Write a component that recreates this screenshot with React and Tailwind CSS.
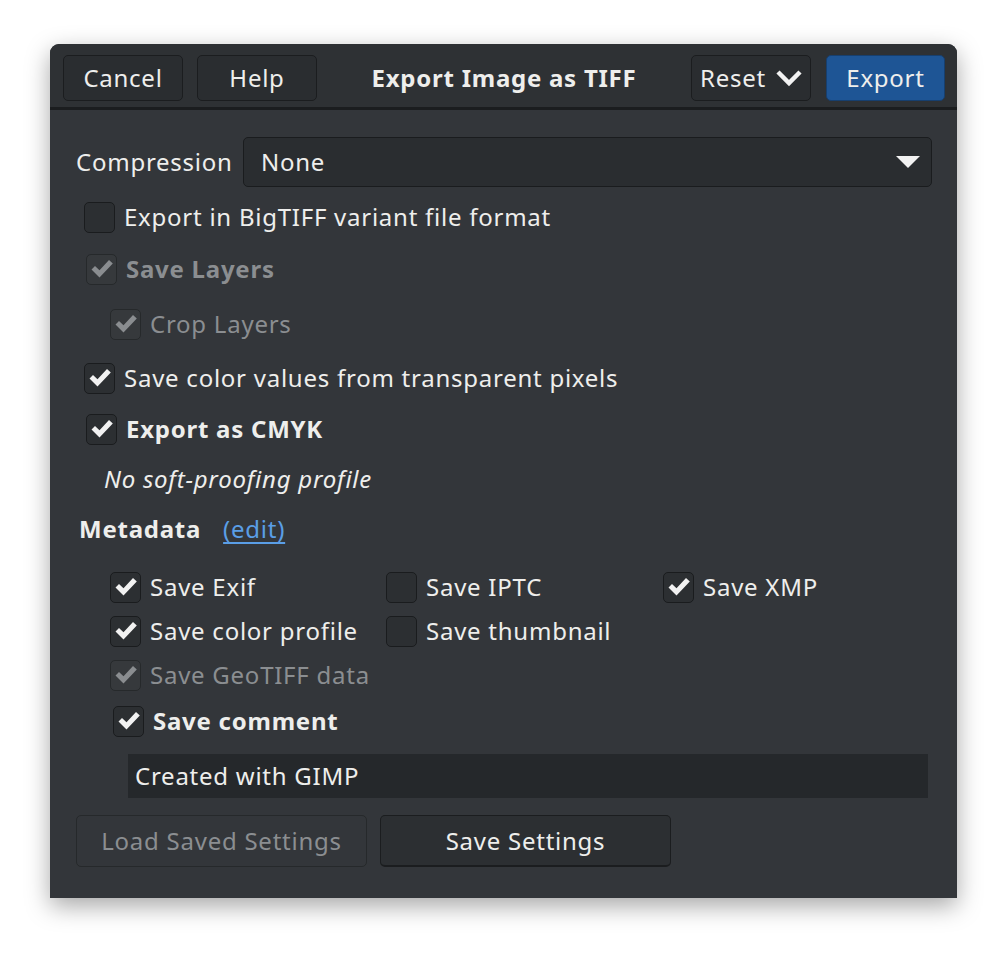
import React from "react"

const font = { fontFamily: "'Noto Sans', 'Open Sans', sans-serif" }

function Check({ checked, disabled }) {
  return (
    <div
      className={`w-[31px] h-[31px] shrink-0 rounded-[5px] border-[1.5px] flex items-center justify-center ${
        disabled ? "border-[#26292b] bg-[#36393c]" : "border-[#1a1c1e] bg-[#2c2f32]"
      }`}
    >
      {checked && (
        <svg width="24" height="22" viewBox="0 0 24 22">
          <path
            d="M1.5 11.5 L5 8 L9.5 12.3 L19 2 L22.8 5.4 L9.5 19.6 Z"
            fill={disabled ? "#8a8d90" : "#f2f2f2"}
          />
        </svg>
      )}
    </div>
  )
}

function CheckRow({ label, checked, disabled, bold, className = "" }) {
  return (
    <div className={`flex items-center gap-[9px] ${className}`}>
      <Check checked={checked} disabled={disabled} />
      <span
        className={`text-[24px] tracking-[0.75px] ${bold ? "font-bold" : ""} ${
          disabled ? "text-[#8b8e91]" : "text-[#eeeeec]"
        }`}
      >
        {label}
      </span>
    </div>
  )
}

function HeaderButton({ children, className = "" }) {
  return (
    <div
      className={`h-[46px] rounded-[5px] border border-[#1b1d1f] flex items-center justify-center text-[24px] tracking-[0.75px] text-[#eeeeec] ${className}`}
    >
      {children}
    </div>
  )
}

export default function App() {
  return (
    <div className="w-[1008px] h-[956px] bg-white pt-[44px] pl-[50px]" style={font}>
      <div className="w-[907px] h-[854px] rounded-t-[9px] bg-[#33363a] shadow-[0_8px_24px_rgba(0,0,0,0.35)] flex flex-col">
        {/* Header bar */}
        <div className="h-[66px] shrink-0 rounded-t-[9px] bg-[#2e3134] border-b-[3px] border-[#1b1d1f] flex items-start pt-[11px] pl-[13px] pr-[12px]">
          <HeaderButton className="w-[120px] bg-[#2a2d30]">Cancel</HeaderButton>
          <HeaderButton className="w-[120px] ml-[14px] bg-[#2a2d30]">Help</HeaderButton>
          <div className="flex-1 h-[46px] flex items-center justify-center text-[24px] tracking-[0.75px] font-bold text-[#eeeeec]">
            Export Image as TIFF
          </div>
          <HeaderButton className="w-[120px] bg-[#2a2d30] gap-[10px]">
            <span>Reset</span>
            <svg width="26" height="18" viewBox="0 0 26 18">
              <path d="M2 3 L13 14 L24 3" stroke="#f2f2f2" strokeWidth="4.5" fill="none" />
            </svg>
          </HeaderButton>
          <HeaderButton className="w-[119px] ml-[15px] bg-[#1e5595] border-[#173f6e]">
            Export
          </HeaderButton>
        </div>

        {/* Body */}
        <div className="flex flex-col text-[#eeeeec]">
          <div className="mt-[27px] h-[50px] flex items-center pl-[26px] pr-[25px]">
            <span className="text-[24px] tracking-[0.75px] w-[167px]">Compression</span>
            <div className="flex-1 h-[50px] rounded-[5px] border-[1.5px] border-[#1a1c1e] bg-[#2a2d30] flex items-center pl-[17px] pr-[10px]">
              <span className="flex-1 text-[24px] tracking-[0.75px]">None</span>
              <svg width="26" height="14" viewBox="0 0 26 14">
                <path d="M1 1 L25 1 L13 13 Z" fill="#f2f2f2" />
              </svg>
            </div>
          </div>

          <CheckRow className="h-[52px] mt-[4px] pl-[34px]" label="Export in BigTIFF variant file format" />
          <CheckRow className="h-[52px] pl-[36px]" label="Save Layers" checked disabled bold />
          <CheckRow className="h-[58px] pl-[60px]" label="Crop Layers" checked disabled />
          <CheckRow className="h-[50px] pl-[34px]" label="Save color values from transparent pixels" checked />
          <CheckRow className="h-[52px] pl-[36px]" label="Export as CMYK" checked bold />

          <div className="h-[48px] flex items-center pl-[54px] text-[24px] tracking-[0.75px] italic">
            No soft-proofing profile
          </div>

          <div className="h-[52px] flex items-center pl-[29px] text-[24px] tracking-[0.75px]">
            <span className="font-bold">Metadata</span>
            <span className="ml-[22px] text-[#5a9ee6] underline underline-offset-[4px]">(edit)</span>
          </div>

          <div className="mt-[10px] pl-[60px] grid grid-cols-[276px_277px_276px]">
            <CheckRow className="h-[44px]" label="Save Exif" checked />
            <CheckRow className="h-[44px]" label="Save IPTC" />
            <CheckRow className="h-[44px]" label="Save XMP" checked />
            <CheckRow className="h-[44px]" label="Save color profile" checked />
            <CheckRow className="h-[44px]" label="Save thumbnail" />
            <div />
            <CheckRow className="h-[44px]" label="Save GeoTIFF data" checked disabled />
          </div>

          <CheckRow className="h-[48px] pl-[63px]" label="Save comment" checked bold />

          <div className="mt-[9px] ml-[78px] mr-[29px] h-[44px] bg-[#25282b] flex items-center pl-[7px] text-[24px] tracking-[0.75px]">
            Created with GIMP
          </div>

          <div className="mt-[17px] pl-[26px] flex gap-[13px]">
            <div className="w-[291px] h-[52px] rounded-[5px] border border-[#26292b] bg-[#33363a] flex items-center justify-center text-[24px] tracking-[0.75px] text-[#8b8e91]">
              Load Saved Settings
            </div>
            <div className="w-[291px] h-[52px] rounded-[5px] border border-[#1b1d1f] border-b-[2px] bg-[#2c2f32] flex items-center justify-center text-[24px] tracking-[0.75px] text-[#eeeeec]">
              Save Settings
            </div>
          </div>
        </div>
      </div>
    </div>
  )
}
